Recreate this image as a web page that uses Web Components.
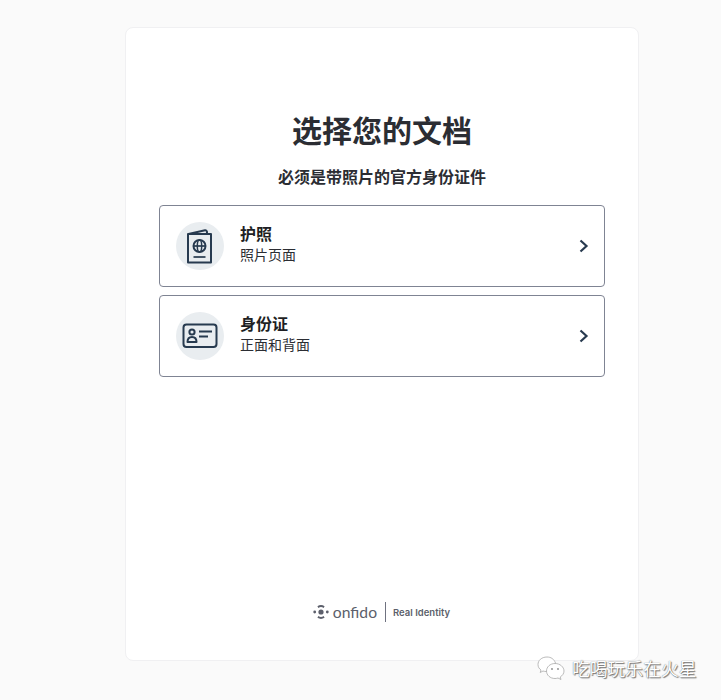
<!DOCTYPE html>
<html lang="zh">
<head>
<meta charset="utf-8">
<title>选择您的文档</title>
<style>
  html, body { margin: 0; height: 100%; background: #fafafa; }
  body { font-family: "Noto Sans CJK SC", "Noto Sans", sans-serif; overflow: hidden; }
</style>
</head>
<body>

<doc-card>
  <doc-heading slot="head" title-text="选择您的文档" sub="必须是带照片的官方身份证件"></doc-heading>
  <doc-option kind="passport" label="护照" hint="照片页面"></doc-option>
  <doc-option kind="id" label="身份证" hint="正面和背面"></doc-option>
  <onfido-mark slot="foot"></onfido-mark>
</doc-card>
<wm-badge>吃喝玩乐在火星</wm-badge>

<script>
let icons = {
  passport: `
    <svg width="26" height="35" viewBox="0 0 26 35" fill="none" stroke="#273a4f" stroke-width="2">
      <path d="M1.500 5 L18 1.300 C19 1.100 19.700 1.600 19.800 2.500 L20.200 5"/>
      <path d="M1 5 H24 V33.500 H1 Z" stroke-linejoin="round"/>
      <circle cx="12.500" cy="17" r="6" stroke-width="2"/>
      <ellipse cx="12.500" cy="17" rx="2.200" ry="6" stroke-width="1.500"/>
      <path d="M6.500 17 H18.500" stroke-width="1.700"/>
      <path d="M6.500 28 H18.500" stroke-width="1.700"/>
    </svg>`,
  id: `
    <svg width="36" height="26" viewBox="0 0 36 26" fill="none" stroke="#273a4f" stroke-width="2">
      <rect x="1.500" y="1.500" width="33" height="22.500" rx="3"/>
      <circle cx="10" cy="9" r="2.600"/>
      <path d="M5.500 19 C5.500 15.500 7.500 14 10 14 C12.500 14 14.500 15.500 14.500 19 Z" stroke-linejoin="round"/>
      <path d="M17 8.500 H30 M17 13.500 H26"/>
    </svg>`
};

class DocCard extends HTMLElement {
  constructor() {
    super();
    this.attachShadow({ mode: 'open' });
    this.shadowRoot.innerHTML = `
      <style>
        :host {
          display: flex;
          flex-direction: column;
          box-sizing: border-box;
          width: 514px;
          height: 634px;
          margin: 27px 0 0 125px;
          padding: 0 33px 38px;
          background: #fff;
          border: 1px solid #f0f0f2;
          border-radius: 8px;
        }
        .list { display: flex; flex-direction: column; gap: 8px; flex: 1; }
      </style>
      <slot name="head"></slot>
      <div class="list"><slot></slot></div>
      <slot name="foot"></slot>
    `;
  }
}

class DocHeading extends HTMLElement {
  constructor() {
    super();
    this.attachShadow({ mode: 'open' });
    this.shadowRoot.innerHTML = `
      <style>
        :host { display: block; text-align: center; color: #2b2d33; padding-top: 79px; padding-bottom: 17px; }
        h1 { margin: 0; font-size: 30px; line-height: 44px; font-weight: 700; }
        p { margin: 13px 0 0; font-size: 16px; line-height: 24px; font-weight: 700; }
      </style>
      <h1></h1>
      <p></p>
    `;
  }

  connectedCallback() {
    this.shadowRoot.querySelector('h1').textContent = this.getAttribute('title-text');
    this.shadowRoot.querySelector('p').textContent = this.getAttribute('sub');
  }
}

class DocOption extends HTMLElement {
  constructor() {
    super();
    this.attachShadow({ mode: 'open' });
    this.shadowRoot.innerHTML = `
      <style>
        :host {
          display: flex;
          align-items: center;
          box-sizing: border-box;
          height: 82px;
          padding: 0 15px 0 16px;
          border: 1px solid #7f8493;
          border-radius: 4px;
          color: #1e1f24;
        }
        .disc {
          display: flex;
          align-items: center;
          justify-content: center;
          width: 48px;
          height: 48px;
          border-radius: 50%;
          background: #e9edf0;
          margin-right: 16px;
          flex: none;
        }
        .text { flex: 1; padding-bottom: 8px; }
        .label { font-size: 16px; line-height: 24px; font-weight: 700; }
        .hint { font-size: 14px; line-height: 18px; color: #2b2d33; }
        svg.chev { flex: none; }
      </style>
      <div class="disc"></div>
      <div class="text"><div class="label"></div><div class="hint"></div></div>
      <svg class="chev" width="10" height="14" viewBox="0 0 10 14" fill="none" stroke="#273a4f" stroke-width="2.200">
        <path d="M1.500 1.500 L7.500 7 L1.500 12.500"/>
      </svg>
    `;
  }

  connectedCallback() {
    let root = this.shadowRoot;
    root.querySelector('.disc').innerHTML = icons[this.getAttribute('kind')];
    root.querySelector('.label').textContent = this.getAttribute('label');
    root.querySelector('.hint').textContent = this.getAttribute('hint');
  }
}

class OnfidoMark extends HTMLElement {
  constructor() {
    super();
    this.attachShadow({ mode: 'open' });
    this.shadowRoot.innerHTML = `
      <style>
        :host {
          display: flex;
          align-items: center;
          justify-content: center;
          height: 20px;
          padding-right: 1px;
          color: #5c5f6b;
          font-family: "Inter", "Noto Sans", sans-serif;
        }
        .name { font-family: "Lato", sans-serif; font-size: 15.700px; margin-left: 4px; }
        .bar { width: 1px; height: 20px; background: #6f7280; margin: 0 7px 0 8px; }
        .tag { font-size: 9.500px; font-weight: 600; }
      </style>
      <svg width="16" height="16" viewBox="0 0 16 16" fill="#5c5f6b">
        <circle cx="8" cy="8" r="2.600"/>
        <circle cx="1.700" cy="8" r="1.400"/>
        <circle cx="14.300" cy="8" r="1.400"/>
        <path d="M4.400 2.200 A6.800 6.800 0 0 1 11.600 2.200 L10.600 4 A4.600 4.600 0 0 0 5.400 4 Z"/>
        <path d="M4.400 13.800 A6.800 6.800 0 0 0 11.600 13.800 L10.600 12 A4.600 4.600 0 0 1 5.400 12 Z"/>
      </svg>
      <span class="name">onfido</span>
      <span class="bar"></span>
      <span class="tag">Real Identity</span>
    `;
  }
}

class WmBadge extends HTMLElement {
  constructor() {
    super();
    this.attachShadow({ mode: 'open' });
    this.shadowRoot.innerHTML = `
      <style>
        :host {
          position: absolute;
          left: 537px;
          top: 656px;
          display: flex;
          align-items: center;
          gap: 6px;
          color: #fff;
          font-size: 17.800px;
          line-height: 24px;
          text-shadow: 0 0 1px #555, 1px 1px 1px #777;
        }
      </style>
      <svg width="29" height="24" viewBox="0 0 29 24" fill="#fff" stroke="#aaa" stroke-width=".8">
        <path d="M10 1 C4.500 1 1 4.500 1 8.500 C1 11 2.200 12.800 4 14 L3.200 16.500 L6 15 C7 15.300 8 15.500 9 15.500 C12 15.500 19 12 18.500 7 C17 3 14 1 10 1 Z"/>
        <path d="M18 7.500 C13 7.500 9.500 11 9.500 15 C9.500 19 13 22.500 18 22.500 C19 22.500 20 22.300 21 22 L24 23.500 L23.200 21 C25.500 19.500 27 17.500 27 15 C27 11 23 7.500 18 7.500 Z"/>
        <circle cx="15" cy="13" r=".9" fill="#888" stroke="none"/>
        <circle cx="21" cy="13" r=".9" fill="#888" stroke="none"/>
      </svg>
      <slot></slot>
    `;
  }
}

customElements.define('doc-card', DocCard);
customElements.define('doc-heading', DocHeading);
customElements.define('doc-option', DocOption);
customElements.define('onfido-mark', OnfidoMark);
customElements.define('wm-badge', WmBadge);
</script>
</body>
</html>
